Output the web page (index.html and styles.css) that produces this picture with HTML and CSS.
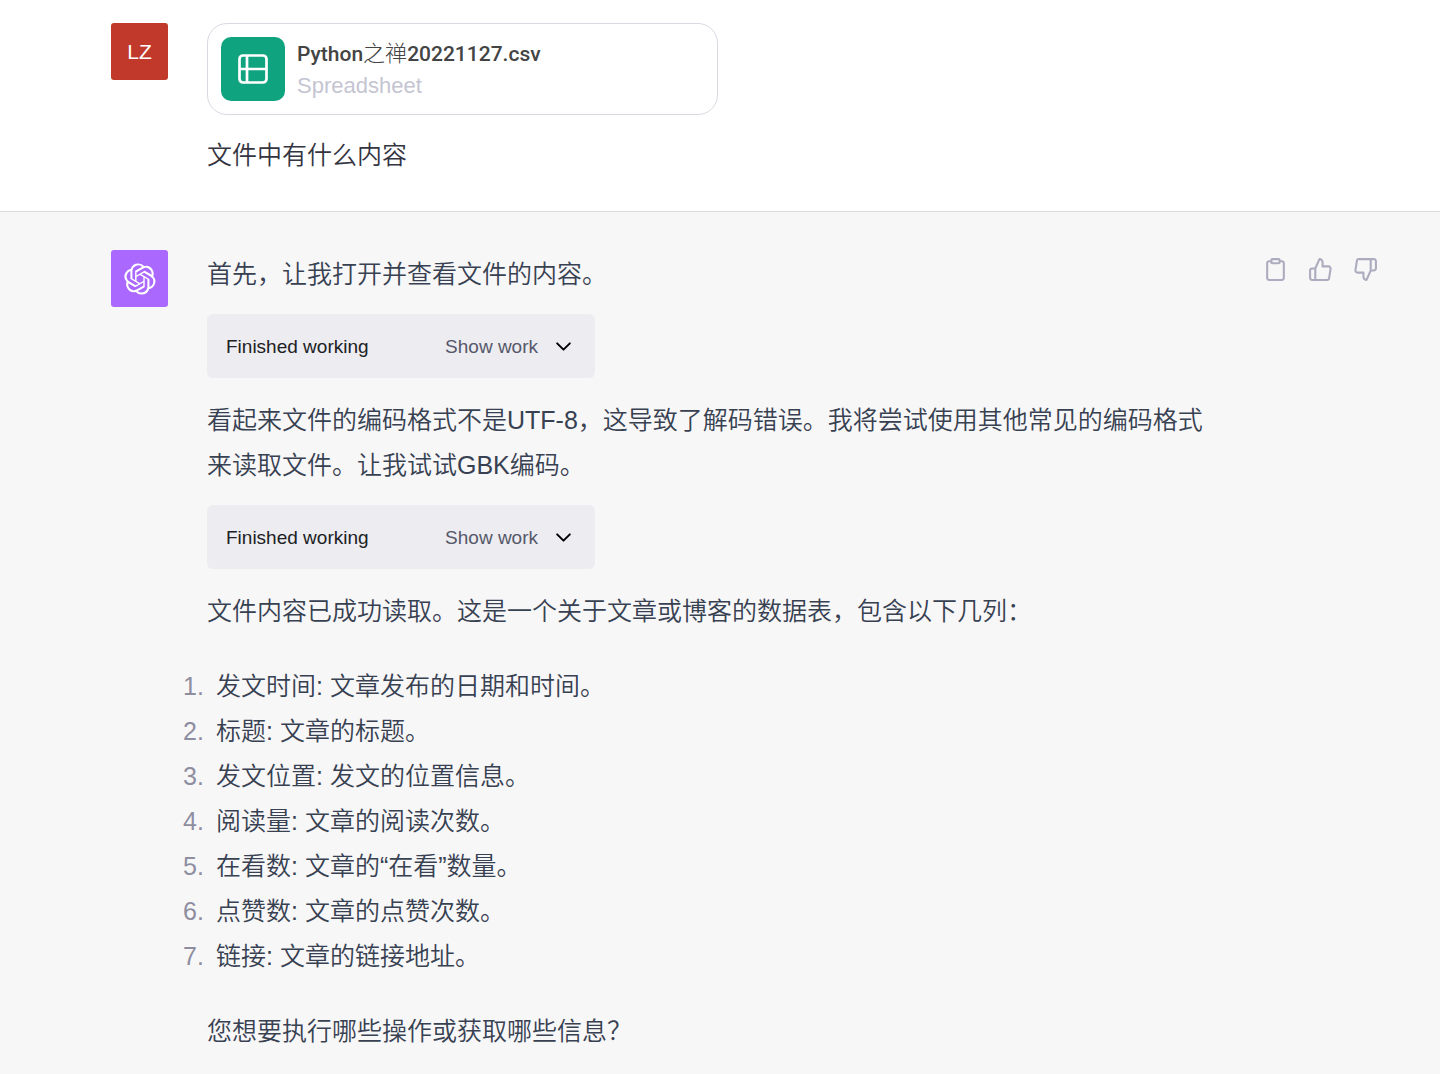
FILE: index.html
```html
<!DOCTYPE html>
<html lang="zh-CN">
<head>
<meta charset="utf-8">
<meta name="viewport" content="width=device-width, initial-scale=1">
<title>Python之禅20221127.csv</title>
<link rel="stylesheet" href="styles.css">
</head>
<body>
<main class="chat">
  <article class="turn turn-user">
    <div class="avatar avatar-user">LZ</div>
    <div class="content">
      <div class="file-card">
        <div class="file-icon">
          <svg width="32" height="32" viewBox="0 0 32 32" fill="none" stroke="currentColor" stroke-width="2.700" aria-hidden="true">
            <rect x="2.500" y="2.500" width="27" height="27" rx="3.500"/>
            <path d="M10 2.500v27M2.500 16h27"/>
          </svg>
        </div>
        <div class="file-text">
          <div class="file-name">Python<span class="file-name-cjk">之禅</span>20221127.csv</div>
          <div class="file-type">Spreadsheet</div>
        </div>
      </div>
      <p>文件中有什么内容</p>
    </div>
  </article>

  <article class="turn turn-assistant">
    <div class="avatar avatar-assistant">
      <svg width="32" height="32" viewBox="0 0 41 41" fill="currentColor" aria-hidden="true">
        <path d="M37.532 16.87a9.963 9.963 0 0 0-.856-8.184 10.078 10.078 0 0 0-10.855-4.835A9.964 9.964 0 0 0 18.306.5a10.079 10.079 0 0 0-9.614 6.977 9.967 9.967 0 0 0-6.664 4.834 10.08 10.08 0 0 0 1.24 11.817 9.965 9.965 0 0 0 .856 8.185 10.079 10.079 0 0 0 10.855 4.835 9.965 9.965 0 0 0 7.516 3.35 10.078 10.078 0 0 0 9.617-6.981 9.967 9.967 0 0 0 6.663-4.834 10.079 10.079 0 0 0-1.243-11.813ZM22.498 37.886a7.474 7.474 0 0 1-4.799-1.735c.061-.033.168-.091.237-.134l7.964-4.6a1.294 1.294 0 0 0 .655-1.134V19.054l3.366 1.944a.12.12 0 0 1 .066.092v9.299a7.505 7.505 0 0 1-7.49 7.496ZM6.392 31.006a7.471 7.471 0 0 1-.894-5.023c.06.036.162.099.237.141l7.964 4.6a1.297 1.297 0 0 0 1.308 0l9.724-5.614v3.888a.12.12 0 0 1-.048.103l-8.051 4.649a7.504 7.504 0 0 1-10.24-2.744ZM4.297 13.62A7.469 7.469 0 0 1 8.2 10.333c0 .068-.004.19-.004.274v9.201a1.294 1.294 0 0 0 .654 1.132l9.723 5.614-3.366 1.944a.12.12 0 0 1-.114.01L7.04 23.856a7.504 7.504 0 0 1-2.743-10.237Zm27.658 6.437-9.724-5.615 3.367-1.943a.121.121 0 0 1 .113-.01l8.052 4.648a7.498 7.498 0 0 1-1.158 13.528v-9.476a1.293 1.293 0 0 0-.65-1.132Zm3.35-5.043c-.059-.037-.162-.099-.236-.141l-7.965-4.6a1.298 1.298 0 0 0-1.308 0l-9.723 5.614v-3.888a.12.12 0 0 1 .048-.103l8.05-4.645a7.497 7.497 0 0 1 11.135 7.763Zm-21.063 6.929-3.367-1.944a.12.12 0 0 1-.065-.092v-9.299a7.497 7.497 0 0 1 12.293-5.756 6.94 6.94 0 0 0-.236.134l-7.965 4.6a1.294 1.294 0 0 0-.654 1.132l-.006 11.225Zm1.829-3.943 4.33-2.501 4.332 2.5v5l-4.331 2.5-4.331-2.5V18Z"/>
      </svg>
    </div>
    <div class="content">
      <p>首先，让我打开并查看文件的内容。</p>
      <div class="work">
        <span>Finished working</span>
        <button class="work-toggle" type="button">Show work
          <svg width="19" height="19" viewBox="0 0 24 24" fill="none" stroke="#000" stroke-width="2.500" stroke-linecap="round" stroke-linejoin="round" aria-hidden="true"><path d="m4 8 8 8 8-8"/></svg>
        </button>
      </div>
      <p>看起来文件的编码格式不是UTF-8，这导致了解码错误。我将尝试使用其他常见的编码格式来读取文件。让我试试GBK编码。</p>
      <div class="work">
        <span>Finished working</span>
        <button class="work-toggle" type="button">Show work
          <svg width="19" height="19" viewBox="0 0 24 24" fill="none" stroke="#000" stroke-width="2.500" stroke-linecap="round" stroke-linejoin="round" aria-hidden="true"><path d="m4 8 8 8 8-8"/></svg>
        </button>
      </div>
      <p>文件内容已成功读取。这是一个关于文章或博客的数据表，包含以下几列：</p>
      <ol class="columns">
        <li>发文时间: 文章发布的日期和时间。</li>
        <li>标题: 文章的标题。</li>
        <li>发文位置: 发文的位置信息。</li>
        <li>阅读量: 文章的阅读次数。</li>
        <li>在看数: 文章的“在看”数量。</li>
        <li>点赞数: 文章的点赞次数。</li>
        <li>链接: 文章的链接地址。</li>
      </ol>
      <p>您想要执行哪些操作或获取哪些信息？</p>
    </div>
    <div class="actions">
      <button class="action" type="button" aria-label="Copy">
        <svg width="25" height="25" viewBox="0 0 24 24" fill="none" stroke="currentColor" stroke-width="2" stroke-linecap="round" stroke-linejoin="round" aria-hidden="true"><path d="M16 4h2a2 2 0 0 1 2 2v14a2 2 0 0 1-2 2H6a2 2 0 0 1-2-2V6a2 2 0 0 1 2-2h2"/><rect x="8" y="2" width="8" height="4" rx="1"/></svg>
      </button>
      <button class="action" type="button" aria-label="Good response">
        <svg width="25" height="25" viewBox="0 0 24 24" fill="none" stroke="currentColor" stroke-width="2" stroke-linecap="round" stroke-linejoin="round" aria-hidden="true"><path d="M14 9V5a3 3 0 0 0-3-3l-4 9v11h11.280a2 2 0 0 0 2-1.700l1.380-9a2 2 0 0 0-2-2.300zM7 22H4a2 2 0 0 1-2-2v-7a2 2 0 0 1 2-2h3"/></svg>
      </button>
      <button class="action" type="button" aria-label="Bad response">
        <svg width="25" height="25" viewBox="0 0 24 24" fill="none" stroke="currentColor" stroke-width="2" stroke-linecap="round" stroke-linejoin="round" aria-hidden="true"><path d="M10 15v4a3 3 0 0 0 3 3l4-9V2H5.720a2 2 0 0 0-2 1.700l-1.380 9a2 2 0 0 0 2 2.300zM17 2h2.670A2.310 2.310 0 0 1 22 4v7a2.310 2.310 0 0 1-2.330 2H17"/></svg>
      </button>
    </div>
  </article>
</main>
</body>
</html>
```
FILE: styles.css
```css
* {
  box-sizing: border-box;
}

body {
  margin: 0;
  background: #f7f7f8;
  color: #374151;
  font: 350 25px/45px "Liberation Sans", "Noto Sans CJK SC", sans-serif;
}

p {
  margin: 0;
}

button {
  padding: 0;
  border: 0;
  background: none;
  font: inherit;
  cursor: pointer;
}

svg {
  display: block;
}

.turn {
  display: flex;
  align-items: flex-start;
  padding: 0 62px 0 111px;
}

.turn-user {
  padding-top: 23px;
  padding-bottom: 33px;
  border-bottom: 1px solid #dddde0;
  background: #fff;
  color: #343541;
}

.turn-assistant {
  padding-top: 38px;
  padding-bottom: 18px;
}

.avatar {
  display: flex;
  flex: none;
  align-items: center;
  justify-content: center;
  width: 57px;
  height: 57px;
  margin-right: 39px;
  border-radius: 3px;
  color: #fff;
}

.avatar-user {
  background: #c0392b;
  font-size: 21px;
}

.avatar-assistant {
  background: #ab68ff;
}

.content {
  flex: 1;
  min-width: 0;
}

.turn-assistant .content {
  padding-top: 2px;
}

.file-card {
  display: flex;
  align-items: center;
  gap: 12px;
  max-width: 511px;
  margin-bottom: 18px;
  padding: 13px;
  border: 1px solid #d9d9e3;
  border-radius: 20px;
}

.file-icon {
  display: flex;
  flex: none;
  align-items: center;
  justify-content: center;
  width: 64px;
  height: 64px;
  border-radius: 10px;
  background: #10a37f;
  color: #fff;
}

.file-text {
  padding-top: 2px;
  font-size: 22px;
  line-height: 31px;
}

.file-name {
  color: #444;
  font-family: Roboto, "Noto Sans CJK SC", sans-serif;
  font-size: 21px;
  font-weight: 500;
}

.file-name-cjk {
  font-size: 22px;
  font-weight: 300;
  line-height: 1;
}

.file-type {
  color: #c5c5d2;
}

.work {
  display: flex;
  align-items: center;
  justify-content: space-between;
  max-width: 388px;
  height: 64px;
  margin: 17px 0 20px;
  padding: 0 22px 0 19px;
  border-radius: 6px;
  background: #ececf1;
  color: #202123;
  font-size: 19px;
}

.work-toggle {
  display: flex;
  align-items: center;
  gap: 16px;
  color: #565869;
}

.columns {
  margin: 30px 0;
  padding: 0;
  list-style: none;
  counter-reset: column;
}

.columns li {
  display: flex;
  margin-left: -24px;
  counter-increment: column;
}

.columns li::before {
  flex: none;
  width: 33px;
  color: #8e8ea0;
  content: counter(column) ".";
}

.actions {
  display: flex;
  flex: none;
  gap: 20px;
  margin-left: 39px;
  padding-top: 7px;
}

.action {
  color: #acacbe;
}
```
